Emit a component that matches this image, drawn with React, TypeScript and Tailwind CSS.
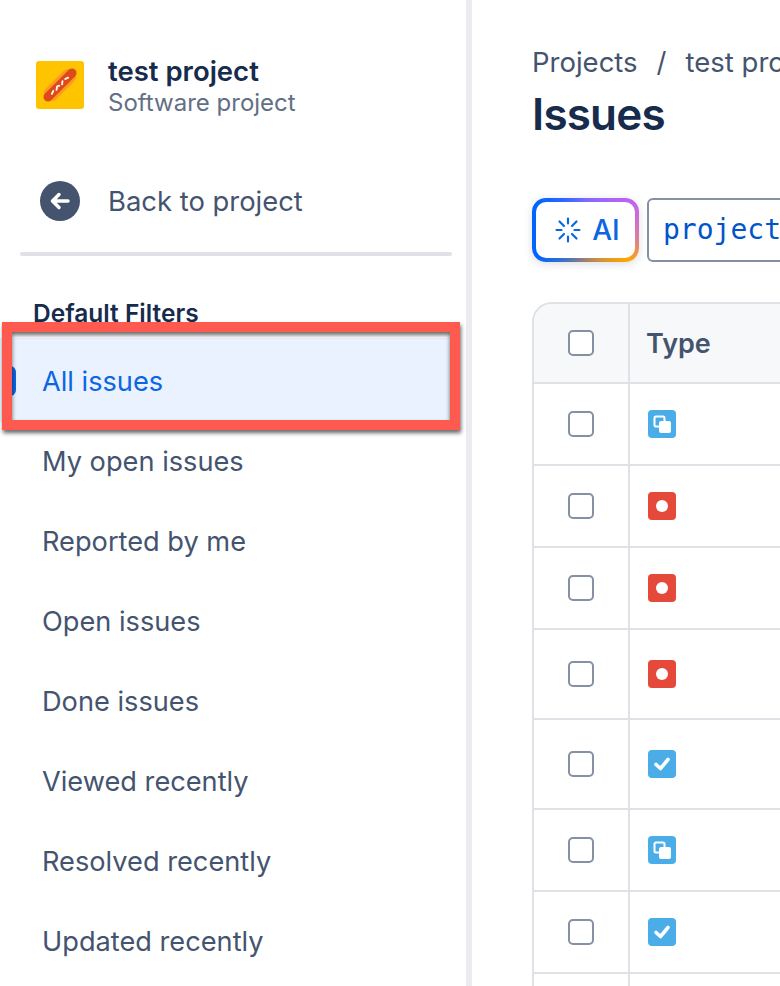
const filters = ["My open issues", "Reported by me", "Open issues", "Done issues", "Viewed recently", "Resolved recently", "Updated recently"];

const rows = [
    { type: "subtask", height: "h-[82px]" },
    { type: "bug", height: "h-[82px]" },
    { type: "bug", height: "h-[82px]" },
    { type: "bug", height: "h-[90px]" },
    { type: "task", height: "h-[90px]" },
    { type: "subtask", height: "h-[82px]" },
    { type: "task", height: "h-[82px]" },
    { type: "", height: "h-[82px]" },
];

function ProjectLogo() {
    return (
        <svg width="48" height="48" viewBox="0 0 48 48" className="shrink-0">
            <rect width="48" height="48" rx="3" fill="#ffc400" />
            <g transform="rotate(-45 24 24)">
                <rect x="4.500" y="16.500" width="39" height="15" rx="7.500" fill="#ff991f" />
                <rect x="2.500" y="19.500" width="43" height="9" rx="4.500" fill="#de4a1a" />
                <path d="M12 24.500l3-1M18 25l3-2 2 1M26 25l2.500-2M32 23.500l3 1" stroke="#fff" strokeWidth="1.800" fill="none" strokeLinecap="round" />
            </g>
        </svg>
    );
}

function BackIcon() {
    return (
        <svg width="40" height="40" viewBox="0 0 40 40" className="shrink-0">
            <circle cx="20" cy="20" r="20" fill="#44546f" />
            <path d="M28 20H13M19 13.500L12.500 20l6.500 6.500" stroke="#fff" strokeWidth="3.500" fill="none" strokeLinecap="round" strokeLinejoin="round" />
        </svg>
    );
}

function SparkIcon() {
    return (
        <svg width="26" height="26" viewBox="0 0 26 26" className="shrink-0">
            <path d="M13 1.500v5M13 19.500v5M1.500 13h5M19.500 13h5M4.500 4.500l4.500 4.500M21.500 4.500L17 9M4.500 21.500L9 17M21.500 21.500L17 17" stroke="#0c66e4" strokeWidth="2.200" strokeLinecap="round" />
        </svg>
    );
}

function TypeIcon({ type }: { type: string }) {
    if (type === "bug") {
        return (
            <svg width="28" height="28" viewBox="0 0 28 28">
                <rect width="28" height="28" rx="4" fill="#e5493a" />
                <circle cx="14" cy="14" r="6" fill="#fff" />
            </svg>
        );
    }
    if (type === "task") {
        return (
            <svg width="28" height="28" viewBox="0 0 28 28">
                <rect width="28" height="28" rx="4" fill="#4bade8" />
                <path d="M8 14.500l4.500 4L20 9.500" stroke="#fff" strokeWidth="3.600" fill="none" strokeLinecap="round" strokeLinejoin="round" />
            </svg>
        );
    }
    return (
        <svg width="28" height="28" viewBox="0 0 28 28">
            <rect width="28" height="28" rx="4" fill="#4bade8" />
            <rect x="6.500" y="6.500" width="10" height="10" rx="1.500" fill="none" stroke="#fff" strokeWidth="2" />
            <rect x="11" y="11" width="12" height="12" rx="2" fill="#fff" />
        </svg>
    );
}

function Checkbox() {
    return <span className="block w-[26px] h-[26px] rounded-[5px] border-[2.5px] border-[#8590a2] bg-white" />;
}

export default function App() {
    return (
        <div className="w-[780px] h-[986px] overflow-hidden flex bg-white font-['Inter',sans-serif]">
            <aside className="relative w-[472px] shrink-0 border-r-[6px] border-[#ebecf0]">
                <div className="flex items-center gap-6 pl-9 pt-[61px] h-[109px]">
                    <ProjectLogo />
                    <div className="flex flex-col mt-[3px]">
                        <span className="text-[27.500px] leading-[31px] font-semibold text-[#172b4d]">test project</span>
                        <span className="text-[24px] leading-[31px] text-[#626f86]">Software project</span>
                    </div>
                </div>
                <div className="flex items-center gap-7 pl-10 mt-[72px] h-10">
                    <BackIcon />
                    <span className="text-[27.400px] leading-[42px] text-[#44546f]">Back to project</span>
                </div>
                <div className="ml-5 mt-[31px] w-[432px] h-1 rounded-sm bg-[#dfe1e6]" />
                <div className="pl-[33px] mt-[42px] text-[24.500px] leading-[30px] font-semibold text-[#172b4d]">Default Filters</div>
                <nav className="mt-[10px]">
                    <div className="relative flex items-center h-[84px] pt-1 mr-3 pl-[42px] bg-[#e9f2fe] text-[27.200px] text-[#0c66e4]">
                        <span className="absolute left-[6px] top-7 w-[10px] h-[30px] rounded-r-md bg-[#0c66e4]" />
                        All issues
                    </div>
                    {filters.map((name) => (
                        <div key={name} className="flex items-center h-20 pl-[42px] text-[27.200px] text-[#44546f]">{name}</div>
                    ))}
                </nav>
                <div className="absolute left-[2px] top-[322px] w-[458px] h-[108px] border-[10px] border-[#ff5a4f] shadow-[1px_3px_4px_rgba(0,0,0,0.6),inset_0_3px_4px_rgba(0,0,0,0.6)]" />
            </aside>
            <main className="flex-1 min-w-0 pl-[60px] overflow-hidden">
                <div className="flex items-center mt-[45px] h-9 text-[27.500px] text-[#44546f] whitespace-nowrap">
                    <span>Projects</span>
                    <span className="mx-[19px]">/</span>
                    <span>test project</span>
                </div>
                <h1 className="mt-[5px] text-[44px] leading-[56px] font-semibold text-[#172b4d] tracking-[-0.8px]">Issues</h1>
                <div className="flex gap-2 mt-[56px] h-16 w-[400px]">
                    <div className="w-[107px] rounded-[14px] p-1 bg-[conic-gradient(from_0deg,#7a6bff,#bf63f3_60deg,#dd7f9a_100deg,#ffa500_125deg,#a08070_180deg,#0065ff_240deg,#0065ff_300deg,#7a6bff)] shadow-[0_2px_8px_rgba(9,30,66,0.15)]">
                        <div className="flex items-center justify-center gap-[11px] h-full pl-1 rounded-[10px] bg-white">
                            <SparkIcon />
                            <span className="text-[28px] font-medium text-[#0c66e4]">AI</span>
                        </div>
                    </div>
                    <div className="flex items-center flex-1 pl-[14px] rounded-md border-2 border-[#8590a2] font-['DejaVu_Sans_Mono',monospace] text-[28px] text-[#0055cc] whitespace-nowrap overflow-hidden">project</div>
                </div>
                <div className="mt-10 w-[400px] rounded-tl-[20px] border-l-2 border-t-2 border-[#dfe1e6]">
                    <div className="flex h-20 border-b-2 border-[#dfe1e6] bg-[#f7f8f9] rounded-tl-[18px]">
                        <div className="flex items-center justify-center w-[96px] border-r-2 border-[#dfe1e6]"><Checkbox /></div>
                        <div className="flex items-center pl-4 pt-[2px] text-[27px] font-semibold text-[#44546f]">Type</div>
                    </div>
                    {rows.map((row, i) => (
                        <div key={i} className={`flex ${row.height} border-b-2 border-[#dfe1e6]`}>
                            <div className="flex items-center justify-center w-[96px] border-r-2 border-[#dfe1e6]"><Checkbox /></div>
                            <div className="flex items-center pl-[18px]">{row.type && <TypeIcon type={row.type} />}</div>
                        </div>
                    ))}
                </div>
            </main>
        </div>
    );
}
